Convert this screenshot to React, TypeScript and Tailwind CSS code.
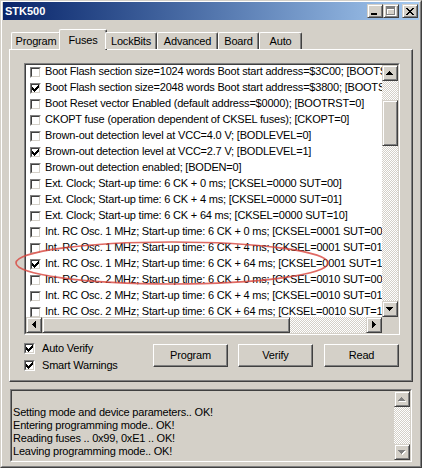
import React from "react";

const raised =
  "border border-t-[#d4d0c8] border-l-[#d4d0c8] border-r-[#404040] border-b-[#404040] shadow-[inset_1px_1px_0_#ffffff,inset_-1px_-1px_0_#808080] bg-[#d4d0c8]";
const button =
  "border border-t-white border-l-white border-r-[#404040] border-b-[#404040] shadow-[inset_-1px_-1px_0_#808080] bg-[#d4d0c8]";
const dither =
  "bg-[image:repeating-conic-gradient(#ffffff_0_25%,#d4d0c8_0_50%)] bg-[length:2px_2px]";

const fuses = [
  { on: false, text: "Boot Flash section size=1024 words Boot start address=$3C00; [BOOTSZ=01]" },
  { on: true, text: "Boot Flash section size=2048 words Boot start address=$3800; [BOOTSZ=00]" },
  { on: false, text: "Boot Reset vector Enabled (default address=$0000); [BOOTRST=0]" },
  { on: false, text: "CKOPT fuse (operation dependent of CKSEL fuses); [CKOPT=0]" },
  { on: false, text: "Brown-out detection level at VCC=4.0 V; [BODLEVEL=0]" },
  { on: true, text: "Brown-out detection level at VCC=2.7 V; [BODLEVEL=1]" },
  { on: false, text: "Brown-out detection enabled; [BODEN=0]" },
  { on: false, text: "Ext. Clock; Start-up time: 6 CK + 0 ms; [CKSEL=0000 SUT=00]" },
  { on: false, text: "Ext. Clock; Start-up time: 6 CK + 4 ms; [CKSEL=0000 SUT=01]" },
  { on: false, text: "Ext. Clock; Start-up time: 6 CK + 64 ms; [CKSEL=0000 SUT=10]" },
  { on: false, text: "Int. RC Osc. 1 MHz; Start-up time: 6 CK + 0 ms; [CKSEL=0001 SUT=00]" },
  { on: false, text: "Int. RC Osc. 1 MHz; Start-up time: 6 CK + 4 ms; [CKSEL=0001 SUT=01]" },
  { on: true, text: "Int. RC Osc. 1 MHz; Start-up time: 6 CK + 64 ms; [CKSEL=0001 SUT=10]" },
  { on: false, text: "Int. RC Osc. 2 MHz; Start-up time: 6 CK + 0 ms; [CKSEL=0010 SUT=00]" },
  { on: false, text: "Int. RC Osc. 2 MHz; Start-up time: 6 CK + 4 ms; [CKSEL=0010 SUT=01]" },
  { on: false, text: "Int. RC Osc. 2 MHz; Start-up time: 6 CK + 64 ms; [CKSEL=0010 SUT=10]" },
];

const tabs = [
  { label: "Program", w: "w-[50px]" },
  { label: "Fuses", w: "w-[48px]", active: true },
  { label: "LockBits", w: "w-[52px]" },
  { label: "Advanced", w: "w-[61px]" },
  { label: "Board", w: "w-[41px]" },
  { label: "Auto", w: "w-[43px]" },
];

const log = [
  "",
  "Setting mode and device parameters.. OK!",
  "Entering programming mode.. OK!",
  "Reading fuses .. 0x99, 0xE1 .. OK!",
  "Leaving programming mode.. OK!",
];

// classic 7x7 check mark, one 3px run per column
const checkCols = [2, 3, 4, 3, 2, 1, 0];

function CheckBox({ on }: { on: boolean }) {
  return (
    <div className="w-[11px] h-[11px] shrink-0 border border-t-[#808080] border-l-[#808080] border-r-white border-b-white">
      <div className="w-full h-full border border-t-[#404040] border-l-[#404040] border-r-[#d4d0c8] border-b-[#d4d0c8] bg-white">
        {on && (
          <svg width="7" height="7" viewBox="0 0 7 7" shapeRendering="crispEdges" className="block">
            {checkCols.map((y, x) => (
              <rect key={x} x={x} y={y} width="1" height="3" fill="#000" />
            ))}
          </svg>
        )}
      </div>
    </div>
  );
}

function Arrow({ dir, disabled }: { dir: "up" | "down" | "left" | "right"; disabled?: boolean }) {
  const shapes = {
    up: { w: 7, h: 4, d: "M3 0h1v1h1v1h1v1h1v1H0V3h1V2h1V1h1z" },
    down: { w: 7, h: 4, d: "M0 0h7v1H6v1H5v1H4v1H3V3H2V2H1V1H0z" },
    left: { w: 4, h: 7, d: "M3 0h1v7H3V6H2V5H1V4H0V3h1V2h1V1h1z" },
    right: { w: 4, h: 7, d: "M0 0h1v1h1v1h1v1h1v1H3v1H2v1H1v1H0z" },
  };
  const s = shapes[dir];
  return (
    <div className={`${raised} w-4 h-4 shrink-0 flex items-center justify-center`}>
      <svg width={s.w + 1} height={s.h + 1} viewBox={`0 0 ${s.w + 1} ${s.h + 1}`} shapeRendering="crispEdges" className="block">
        {disabled && <path d={s.d} fill="#ffffff" transform="translate(1 1)" />}
        <path d={s.d} fill={disabled ? "#808080" : "#000000"} />
      </svg>
    </div>
  );
}

function TitleBar() {
  return (
    <div className="h-[18px] shrink-0 bg-linear-to-r from-[#0a246a] to-[#a6caf0] flex items-center pl-[2px] pr-px">
      <span className="text-white font-bold tracking-normal text-[11px]">STK500</span>
      <div className="ml-auto flex items-center">
        <div className={`${raised} w-4 h-[14px] flex items-end pl-[3px] pb-[2px]`}>
          <div className="w-[6px] h-[2px] bg-black" />
        </div>
        <div className={`${raised} w-4 h-[14px] flex items-center justify-center`}>
          <svg width="10" height="10" viewBox="0 0 10 10" shapeRendering="crispEdges" className="block">
            <path d="M1 1h9v9H1z M2 4v5h7V4z" fill="#ffffff" fillRule="evenodd" />
            <path d="M0 0h9v9H0z M1 3v5h7V3z" fill="#808080" fillRule="evenodd" />
          </svg>
        </div>
        <div className={`${raised} w-4 h-[14px] ml-[3px] flex items-center justify-center`}>
          <svg width="8" height="7" viewBox="0 0 8 7" shapeRendering="crispEdges" className="block">
            <path
              d="M0 0h2v1h1v1h2V1h1V0h2v1H7v1H6v1H5v1h1v1h1v1h1v1H6V6H5V5H3v1H2v1H0V6h1V5h1V4h1V3H2V2H1V1H0z"
              fill="#000"
            />
          </svg>
        </div>
      </div>
    </div>
  );
}

function FuseList() {
  return (
    <div className="w-[376px] h-[272px] border border-t-[#808080] border-l-[#808080] border-r-white border-b-white">
      <div className="h-full border border-t-[#404040] border-l-[#404040] border-r-[#d4d0c8] border-b-[#d4d0c8] bg-white grid grid-cols-[1fr_16px] grid-rows-[1fr_16px]">
        <div className="overflow-hidden">
          {fuses.map((f, i) => (
            <div key={i} className="h-4 flex items-start whitespace-nowrap">
              <div className="ml-[4px] mt-[2px]">
                <CheckBox on={f.on} />
              </div>
              <span className="ml-[4px] leading-[12px]">{f.text}</span>
            </div>
          ))}
        </div>
        <div className="flex flex-col">
          <Arrow dir="up" />
          <div className={`flex-1 ${dither}`}>
            <div className={`${raised} mt-[19px] h-[46px]`} />
          </div>
          <Arrow dir="down" />
        </div>
        <div className="flex">
          <Arrow dir="left" />
          <div className={`flex-1 flex ${dither}`}>
            <div className={`${raised} w-[248px] h-full`} />
          </div>
          <Arrow dir="right" />
        </div>
        <div className="bg-[#d4d0c8]" />
      </div>
    </div>
  );
}

function LogBox() {
  return (
    <div className="mt-[7px] mx-[7px] h-[73px] border border-t-[#808080] border-l-[#808080] border-r-white border-b-white">
      <div className="h-full border border-t-[#404040] border-l-[#404040] border-r-[#d4d0c8] border-b-[#d4d0c8] bg-[#d4d0c8] flex">
        <div className="flex-1 pl-px pt-[2px] leading-[13px] overflow-hidden">
          {log.map((l, i) => (
            <div key={i} className="h-[13px] whitespace-nowrap">
              {l}
            </div>
          ))}
        </div>
        <div className="w-4 flex flex-col">
          <Arrow dir="up" disabled />
          <div className={`flex-1 ${dither}`} />
          <Arrow dir="down" disabled />
        </div>
      </div>
    </div>
  );
}

export default function App() {
  return (
    <div className="relative w-[422px] h-[468px] bg-[#d4d0c8] border border-t-[#d4d0c8] border-l-[#d4d0c8] border-r-[#404040] border-b-[#404040] font-['Liberation_Sans',Arial,sans-serif] text-[11px] tracking-[-0.2px] text-black">
      <div className="h-full border border-t-white border-l-white border-r-[#808080] border-b-[#808080] px-px flex flex-col">
        <TitleBar />

        <div className="mt-[9px] mx-[6px]">
          {/* tabs */}
          <div className="relative z-10 h-[20px] flex items-end pl-[2px]">
            {tabs.map((t) =>
              t.active ? (
                <div
                  key={t.label}
                  className={`${t.w} h-[21px] -mb-px -mx-[2px] bg-[#d4d0c8] rounded-t-[2px] border-t border-l border-r border-t-white border-l-white border-r-[#404040] shadow-[inset_-1px_0_0_#808080] flex items-center justify-center`}
                >
                  Fuses
                </div>
              ) : (
                <div
                  key={t.label}
                  className={`${t.w} h-[17px] pt-px bg-[#d4d0c8] rounded-t-[2px] border-t border-l border-r border-t-white border-l-white border-r-[#404040] shadow-[inset_-1px_0_0_#808080] flex items-center justify-center`}
                >
                  {t.label}
                </div>
              )
            )}
          </div>

          {/* tab sheet */}
          <div className={`${button} h-[333px] pt-[13px] pl-[14px]`}>
            <FuseList />
            <div className="flex mt-[5px]">
              <div className="w-[129px] flex flex-col">
                <label className="h-[17px] flex items-center gap-[7px]">
                  <CheckBox on />
                  Auto Verify
                </label>
                <label className="h-[17px] flex items-center gap-[7px]">
                  <CheckBox on />
                  Smart Warnings
                </label>
              </div>
              <div className="mt-[4px] flex gap-[10px]">
                <button className={`${button} w-[75px] h-[23px]`}>Program</button>
                <button className={`${button} w-[75px] h-[23px]`}>Verify</button>
                <button className={`${button} w-[75px] h-[23px] ml-px`}>Read</button>
              </div>
            </div>
          </div>
        </div>

        <LogBox />
      </div>

      {/* hand drawn mark over the list */}
      <svg className="absolute inset-0 pointer-events-none" width="420" height="466" viewBox="0 0 420 466">
        <ellipse cx="171" cy="262" rx="156" ry="21" fill="none" stroke="#d8443c" strokeWidth="1.6" opacity="0.8" />
      </svg>
    </div>
  );
}
